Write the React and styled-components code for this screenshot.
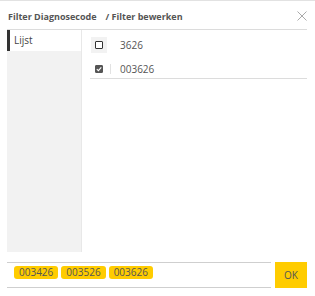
import React from 'react';
import styled, { createGlobalStyle } from 'styled-components';

const GlobalStyle = createGlobalStyle`
	html, body {
		margin: 0;
		padding: 0;
		background: #fff;
		font-family: 'Open Sans', 'Liberation Sans', sans-serif;
	}
`;

const items = [
	{ code: '3626', checked: false, hover: true },
	{ code: '003626', checked: true },
];

const selected = ['003426', '003526', '003626'];

function App() {
	return (
		<>
			<GlobalStyle />
			<Dialog>
				<Header>
					<Title>
						Filter Diagnosecode<Sub>/ Filter bewerken</Sub>
					</Title>
					<Close>
						<svg width='10' height='10' viewBox='0 0 10 10'>
							<path d='M0.5 0.5 L9.5 9.5 M9.5 0.5 L0.5 9.5' stroke='#aaa' strokeWidth='1' fill='none' />
						</svg>
					</Close>
				</Header>
				<Body>
					<Sidebar>
						<Tab active>Lijst</Tab>
					</Sidebar>
					<List>
						{items.map((item, i) => (
							<Row key={i} last={i === items.length - 1}>
								<CheckCell hover={item.hover}>
									<Checkbox checked={item.checked}>
										{item.checked && (
											<svg width='6' height='6' viewBox='0 0 6 6'>
												<path d='M0.8 3.2 L2.4 4.7 L5.3 1.3' stroke='#fff' strokeWidth='1.1' fill='none' />
											</svg>
										)}
									</Checkbox>
								</CheckCell>
								<Divider visible={item.checked} />
								<Code>{item.code}</Code>
							</Row>
						))}
					</List>
				</Body>
				<Footer>
					<TagBox>
						{selected.map(s => (
							<Tag key={s}>{s}</Tag>
						))}
					</TagBox>
					<OkButton>OK</OkButton>
				</Footer>
			</Dialog>
		</>
	);
}

const Dialog = styled.div`
	width: 315px;
	height: 296px;
	box-sizing: border-box;
	border-top: 1px solid #e2e2e2;
	padding: 0 8px 0 7px;
`;

const Header = styled.div`
	height: 29px;
	box-sizing: border-box;
	border-bottom: 1px solid #dcdcdc;
	display: flex;
	justify-content: space-between;
	align-items: flex-start;
	padding-top: 10px;
`;

const Title = styled.div`
	font-size: 9px;
	line-height: 12px;
	font-weight: 700;
	color: #555;
	padding-left: 1px;
`;

const Sub = styled.span`
	margin-left: 9px;
`;

const Close = styled.div`
	width: 10px;
	height: 10px;
	line-height: 0;
`;

const Body = styled.div`
	height: 232px;
	display: flex;
	gap: 8px;
`;

const Sidebar = styled.div`
	width: 75px;
	height: 222px;
	background: #f2f2f2;
	border-right: 1px solid #e8e8e8;
	box-sizing: border-box;
`;

const Tab = styled.div`
	height: 21px;
	background: ${p => (p.active ? '#fff' : 'transparent')};
	border-left: 3px solid ${p => (p.active ? '#333' : 'transparent')};
	padding-left: 4px;
	font-size: 10px;
	line-height: 21px;
	color: #444;
`;

const List = styled.div`
	flex: 1;
	padding-top: 3px;
`;

const Row = styled.div`
	height: ${p => (p.last ? '18px' : '24px')};
	padding-top: ${p => (p.last ? '3px' : '0')};
	display: flex;
	align-items: center;
	border-bottom: ${p => (p.last ? '1px solid #dcdcdc' : 'none')};
`;

const CheckCell = styled.div`
	width: 16px;
	height: 16px;
	margin-left: 1px;
	display: flex;
	align-items: center;
	justify-content: center;
	background: ${p => (p.hover ? '#f2f2f2' : 'transparent')};
`;

const Checkbox = styled.div`
	width: 8px;
	height: 8px;
	box-sizing: border-box;
	border: 1px solid ${p => (p.checked ? '#555' : '#333')};
	border-radius: 1px;
	background: ${p => (p.checked ? '#555' : '#fff')};
	display: flex;
	align-items: center;
	justify-content: center;
`;

const Divider = styled.div`
	width: 1px;
	height: 10px;
	margin-left: 3px;
	background: ${p => (p.visible ? '#e2e2e2' : 'transparent')};
`;

const Code = styled.div`
	margin-left: 9px;
	font-size: 10px;
	color: #555;
`;

const Footer = styled.div`
	display: flex;
	gap: 4px;
	height: 26px;
`;

const TagBox = styled.div`
	flex: 1;
	box-sizing: border-box;
	border-top: 1px solid #cfcfcf;
	border-bottom: 1px solid #cfcfcf;
	display: flex;
	align-items: flex-start;
	padding: 3px 0 0 7px;
	gap: 3px;
`;

const Tag = styled.div`
	height: 13px;
	padding: 0 5px;
	background: #ffcc00;
	border-radius: 3px;
	font-size: 10px;
	line-height: 13px;
	color: #555;
`;

const OkButton = styled.div`
	width: 32px;
	background: #ffcc00;
	display: flex;
	align-items: center;
	justify-content: center;
	font-size: 10px;
	color: #555;
`;

export default App;
